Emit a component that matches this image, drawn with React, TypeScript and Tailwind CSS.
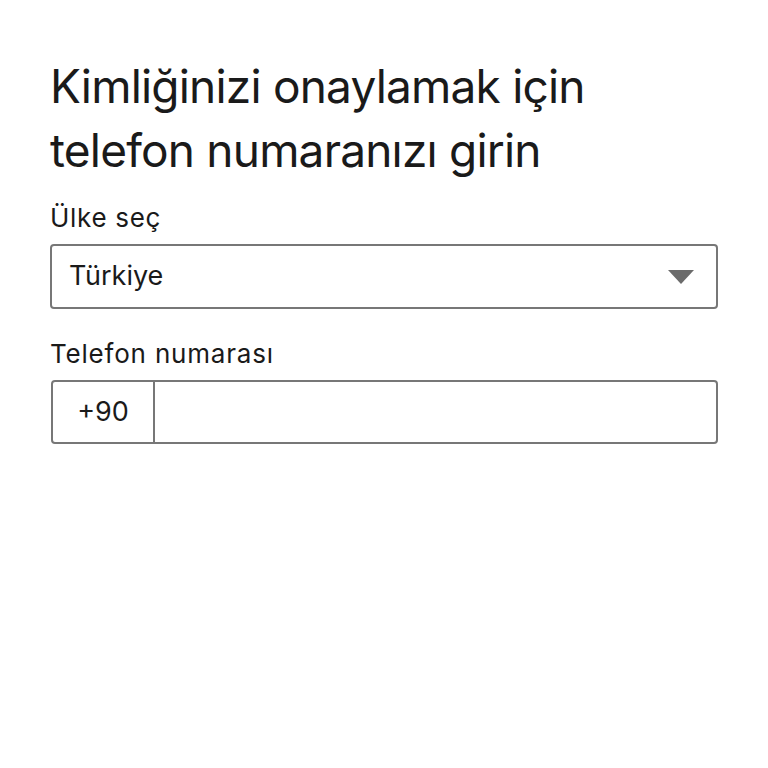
import React from "react";

export default function App() {
  return (
    <div className="min-h-[768px] w-[768px] bg-white text-[#1a1a1a]" style={{ fontFamily: "Inter, Roboto, 'Noto Sans', sans-serif" }}>
      <div className="pl-[50px] pr-[50px] pt-[54px]">
        <h1 className="text-[46px] leading-[64px] font-normal tracking-[-0.8px]">
          Kimliğinizi onaylamak için
          <br />
          telefon numaranızı girin
        </h1>
        <div className="mt-[20px] text-[26px] leading-[32px] tracking-[0.7px]">Ülke seç</div>
        <div className="mt-[10px] h-[65px] w-[668px] rounded-[4px] border-2 border-[#777777] flex items-center justify-between pl-[17px] pr-[22px]">
          <span className="text-[27px]">Türkiye</span>
          <svg width="26" height="14" viewBox="0 0 26 14">
            <path d="M0 0 H26 L13 14 Z" fill="#6b6b6b" />
          </svg>
        </div>
        <div className="mt-[29px] text-[26px] leading-[32px] tracking-[0.8px]">Telefon numarası</div>
        <div className="mt-[10px] ml-[1px] h-[64px] w-[667px] rounded-[4px] border-2 border-[#777777] flex">
          <div className="w-[102px] flex items-center justify-center border-r-2 border-[#777777] text-[27px]">+90</div>
          <div className="flex-1" />
        </div>
      </div>
    </div>
  );
}
